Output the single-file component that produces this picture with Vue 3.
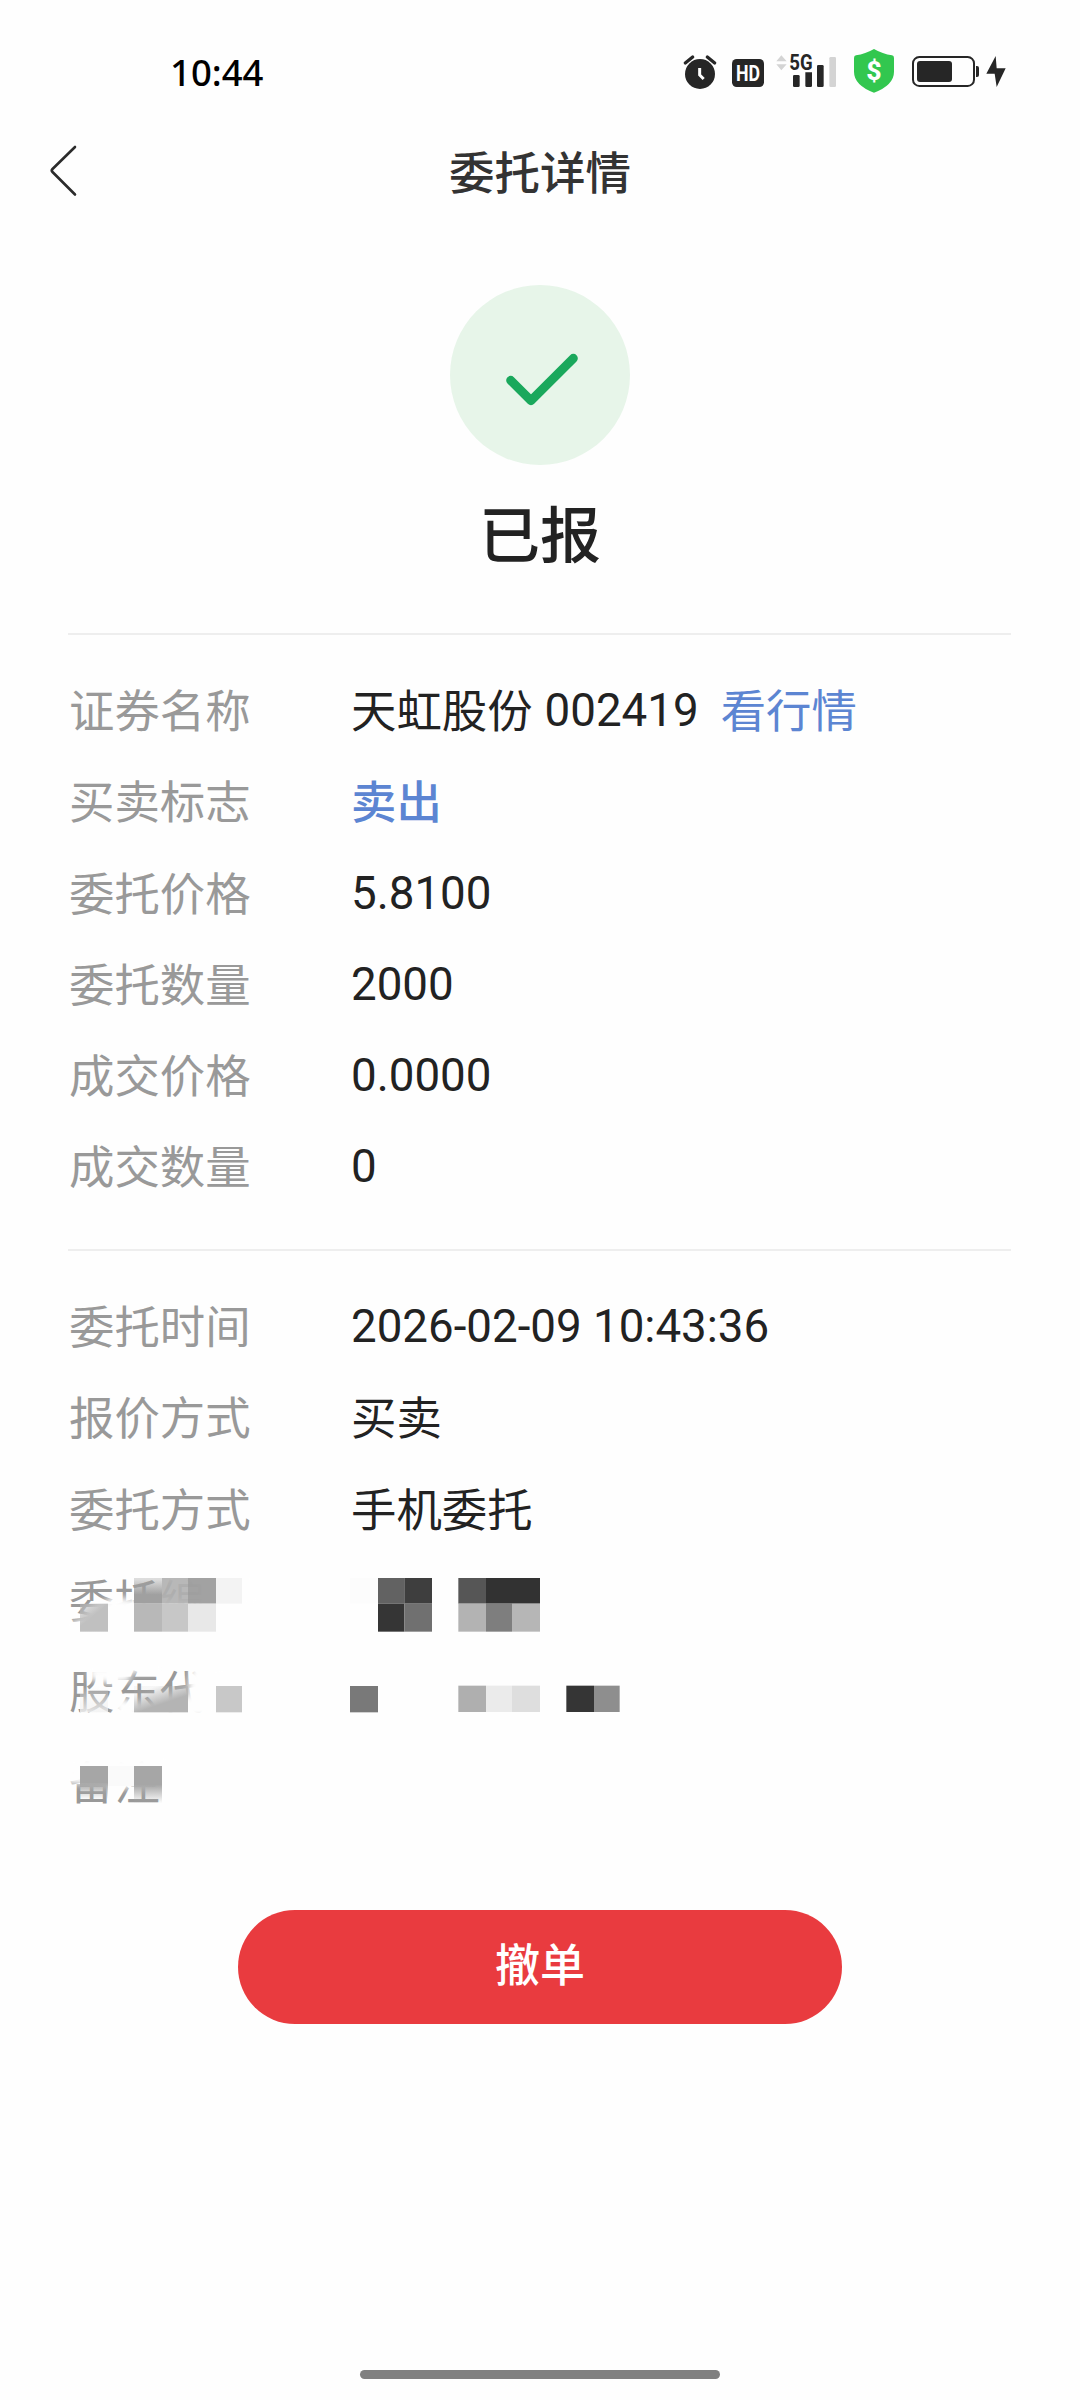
<script setup>
const orderRows = [
  { label: '证券名称', text: '天虹股份', number: '002419', link: '看行情' },
  { label: '买卖标志', text: '卖出', side: true },
  { label: '委托价格', number: '5.8100' },
  { label: '委托数量', number: '2000' },
  { label: '成交价格', number: '0.0000' },
  { label: '成交数量', number: '0' },
]
const detailRows = [
  { label: '委托时间', number: '2026-02-09 10:43:36' },
  { label: '报价方式', text: '买卖' },
  { label: '委托方式', text: '手机委托' },
  { label: '委托编' },
  { label: '股东代' },
  { label: '备注' },
]
// Redaction tiles: x, y, width, height, fill, opacity (three units per pixel)
const tiles = [
  [336, 84, 78, 77, '#b0b0b0', 0.9],
  [414, 84, 84, 77, '#9f9f9f', 0.97],
  [498, 84, 78, 77, '#f3f3f3', 1],
  [252, 161, 84, 84, '#b8b8b8', 1],
  [336, 161, 78, 84, '#c7c7c7', 1],
  [414, 161, 84, 84, '#e8e8e8', 1],
  [498, 408, 78, 79, '#c8c8c8', 1],
  [174, 648, 78, 60, '#fafafa', 1],
  [900, 84, 84, 77, '#fcfcfc', 1],
  [984, 84, 79, 77, '#626262', 1],
  [1063, 84, 83, 77, '#3e3e3e', 1],
  [984, 161, 79, 84, '#353535', 1],
  [1063, 161, 83, 84, '#707070', 1],
  [1225, 84, 83, 77, '#565656', 1],
  [1308, 84, 162, 77, '#323232', 1],
  [1225, 161, 83, 84, '#b3b3b3', 1],
  [1308, 161, 78, 84, '#7e7e7e', 1],
  [1386, 161, 84, 84, '#b6b6b6', 1],
  [900, 408, 84, 79, '#797979', 1],
  [1225, 407, 83, 79, '#afafaf', 1],
  [1308, 407, 78, 79, '#ebebeb', 1],
  [1386, 407, 84, 79, '#dedede', 1],
  [1549, 407, 83, 79, '#353535', 1],
  [1632, 407, 77, 79, '#8e8e8e', 1],
]
</script>

<template>
  <div class="screen">
    <header class="status">
      <span class="clock">10:44</span>
      <svg class="status-icons" viewBox="0 0 1110 240">
        <g fill="#262626">
          <circle cx="120" cy="132" r="45" />
          <path d="M76 99 L98 81 M164 99 L142 81" stroke="#262626" stroke-width="10" stroke-linecap="round" />
          <path d="M119 114 V135 L131 147" fill="none" stroke="#fefefe" stroke-width="9" />
          <rect x="216" y="87" width="96" height="84" rx="14" />
          <text x="264" y="153" class="hd" fill="#fff" text-anchor="middle" textLength="72" lengthAdjust="spacingAndGlyphs">HD</text>
          <path d="M349 94 L364 76 L380 94Z M349 103 L364 121 L380 103Z" fill="#d4d4d4" />
          <text x="388" y="121" class="net" textLength="70" lengthAdjust="spacingAndGlyphs">5G</text>
          <rect x="399" y="135" width="20" height="36" rx="4" />
          <path d="M436 127 H456 V167 Q456 171 452 171 H440 Q436 171 436 167Z" />
          <rect x="471" y="105" width="20" height="66" rx="4" />
          <rect x="508" y="81" width="20" height="90" rx="4" fill="#d4d4d4" />
        </g>
        <path d="M642 57 Q668 72 696 76 Q702 77 702 84 V125 Q702 165 642 188 Q582 165 582 125 V84 Q582 77 588 76 Q616 72 642 57Z" fill="#32c74f" />
        <text x="642" y="151" class="dollar" fill="#fff" text-anchor="middle">$</text>
        <rect x="759" y="81" width="183" height="87" rx="19" fill="none" stroke="#262626" stroke-width="6" />
        <rect x="771" y="93" width="105" height="63" rx="9" fill="#262626" />
        <path d="M948 108 H951 Q957 108 957 114 V135 Q957 141 951 141 H948Z" fill="#262626" />
        <path d="M1007 78 L979 131 H1004 L1010 171 L1037 115 H1010Z" fill="#262626" />
      </svg>
    </header>

    <nav class="nav">
      <svg class="back" viewBox="0 0 30 54">
        <path d="M26 3 L3.500 25 Q2 26.500 3.500 28 L26 50.500" fill="none" stroke="#2b2b2b" stroke-width="2.600" stroke-linecap="round" />
      </svg>
      <h1>委托详情</h1>
    </nav>

    <section class="result">
      <svg class="badge" viewBox="0 0 540 540">
        <circle cx="270" cy="270" r="270" fill="#e7f5e9" />
        <path d="M182 286 L243 347 L370 220" fill="none" stroke="#1aa85c" stroke-width="27" stroke-linecap="round" stroke-linejoin="round" />
      </svg>
      <h2>已报</h2>
    </section>

    <section class="rows">
      <div v-for="row in orderRows" :key="row.label" class="row">
        <span class="label">{{ row.label }}</span>
        <span v-if="row.text" class="text" :class="{ side: row.side }">{{ row.text }}</span>
        <span v-if="row.number" class="number">{{ row.number }}</span>
        <a v-if="row.link" class="link">{{ row.link }}</a>
      </div>
    </section>

    <section class="rows second">
      <div v-for="row in detailRows" :key="row.label" class="row">
        <span class="label">{{ row.label }}</span>
        <span v-if="row.text" class="text">{{ row.text }}</span>
        <span v-if="row.number" class="number">{{ row.number }}</span>
      </div>
      <svg class="redaction" viewBox="0 0 1800 810">
        <defs>
          <filter id="soft" x="-30%" y="-30%" width="160%" height="160%"><feGaussianBlur stdDeviation="9" /></filter>
          <linearGradient id="fadeDown" x1="0" y1="0" x2="0" y2="1">
            <stop offset="0.05" stop-color="#a0a0a0" stop-opacity="0.35" />
            <stop offset="0.65" stop-color="#a0a0a0" />
          </linearGradient>
          <linearGradient id="fadeCorner" x1="0" y1="0" x2="0.8" y2="1">
            <stop offset="0" stop-color="#c0c0c0" stop-opacity="0.35" />
            <stop offset="0.5" stop-color="#c0c0c0" />
          </linearGradient>
          <linearGradient id="fadeLight" x1="0" y1="0" x2="0" y2="1">
            <stop offset="0" stop-color="#f2f2f2" stop-opacity="0" />
            <stop offset="1" stop-color="#f2f2f2" stop-opacity="0.85" />
          </linearGradient>
          <linearGradient id="fadeWide" x1="0" y1="0" x2="0.7" y2="1">
            <stop offset="0.2" stop-color="#b4b4b4" stop-opacity="0.1" />
            <stop offset="0.7" stop-color="#b4b4b4" />
          </linearGradient>
          <linearGradient id="fadeUp" x1="0" y1="0" x2="0" y2="1">
            <stop offset="0.5" stop-color="#a6a6a6" />
            <stop offset="1" stop-color="#a6a6a6" stop-opacity="0" />
          </linearGradient>
        </defs>
        <g fill="#fefefe" filter="url(#soft)">
          <path d="M120 178 L190 140 L250 148 L600 156 V260 H50 V222 L110 205Z" />
          <path d="M340 70 H620 V160 H455 V96 L340 88Z" />
          <path d="M118 350 H210 V400 H165 L118 388Z" />
          <path d="M190 345 H335 V368 H240 V395 H195Z" />
          <path d="M190 440 L238 450 L300 470 L330 440 H500 V500 H200Z" />
          <path d="M425 350 H520 V500 H415 V400Z" />
          <path d="M50 620 H350 V708 L215 715 L150 706 L50 700Z" />
        </g>
        <rect x="252" y="84" width="84" height="77" fill="url(#fadeDown)" />
        <rect x="90" y="161" width="84" height="84" fill="url(#fadeCorner)" />
        <rect x="90" y="408" width="84" height="79" fill="url(#fadeLight)" />
        <rect x="252" y="408" width="162" height="79" fill="url(#fadeWide)" />
        <rect x="90" y="648" width="84" height="100" fill="url(#fadeUp)" />
        <rect x="252" y="648" width="84" height="112" fill="url(#fadeUp)" />
        <rect v-for="(t, i) in tiles" :key="i" :x="t[0]" :y="t[1]" :width="t[2]" :height="t[3]" :fill="t[4]" :opacity="t[5]" />
      </svg>
    </section>

    <button class="cancel">撤单</button>
    <div class="home-bar"></div>
  </div>
</template>

<style>
body {
  background: #fefefe;
}
</style>

<style scoped>
.screen {
  box-sizing: border-box;
  width: 1080px;
  height: 2400px;
  display: flex;
  flex-direction: column;
  background: #fefefe;
  color: #222;
  font-family: Roboto, "Noto Sans CJK SC", sans-serif;
  overflow: hidden;
}
.status {
  height: 110px;
  display: flex;
  align-items: flex-end;
  justify-content: space-between;
  padding: 0 50px 0 170px;
}
.clock {
  height: 80px;
  line-height: 84px;
  font-family: "Noto Sans", sans-serif;
  font-size: 36.500px;
  font-weight: 500;
  color: #000;
}
.status-icons {
  width: 370px;
  height: 80px;
}
.hd,
.net {
  font-family: Roboto, sans-serif;
  font-weight: 700;
}
.hd {
  font-size: 67px;
}
.net {
  font-size: 65px;
}
.dollar {
  font-family: Roboto, sans-serif;
  font-size: 80px;
  font-weight: 800;
}
.nav {
  height: 124px;
  display: grid;
  grid-template-columns: 100px 1fr 100px;
  align-items: center;
}
.back {
  width: 30px;
  height: 54px;
  margin-left: 49px;
  margin-bottom: 3px;
}
h1 {
  margin: 0;
  padding-top: 6px;
  text-align: center;
  font-size: 45.500px;
  line-height: 66px;
  font-weight: 500;
  color: #333;
}
.result {
  height: 399px;
  padding-top: 51px;
  box-sizing: border-box;
  display: flex;
  flex-direction: column;
  align-items: center;
}
.badge {
  width: 180px;
  height: 180px;
}
h2 {
  margin: 27px 0 0;
  font-size: 61px;
  line-height: 90px;
  font-weight: 500;
}
.rows {
  position: relative;
  flex: none;
  height: 583px;
  margin: 0 69px 0 68px;
  padding: 31px 0 0 1px;
  border-top: 2px solid #eee;
}
.second {
  height: 597px;
}
.row {
  display: flex;
  height: 91.300px;
  line-height: 90.300px;
  font-size: 45.400px;
  white-space: nowrap;
}
.label,
.text,
.link {
  padding-top: 2px;
}
.label {
  width: 282px;
  color: #999;
}
.number {
  font-size: 45.700px;
}
.text + .number {
  margin-left: 12px;
}
.side,
.link {
  color: #5c85d2;
}
.side {
  font-weight: 500;
}
.link {
  margin-left: 22px;
}
.redaction {
  position: absolute;
  left: -18px;
  top: 299px;
  width: 600px;
  height: 270px;
}
.cancel {
  align-self: center;
  flex: none;
  width: 604px;
  height: 114px;
  margin-top: 31px;
  padding: 0;
  border: 0;
  border-radius: 57px;
  background: #e93b3f;
  color: #fff;
  font: 500 45px/112px Roboto, "Noto Sans CJK SC", sans-serif;
}
.home-bar {
  align-self: center;
  width: 360px;
  height: 9px;
  margin: auto 0 21px;
  border-radius: 5px;
  background: #808080;
}
</style>
